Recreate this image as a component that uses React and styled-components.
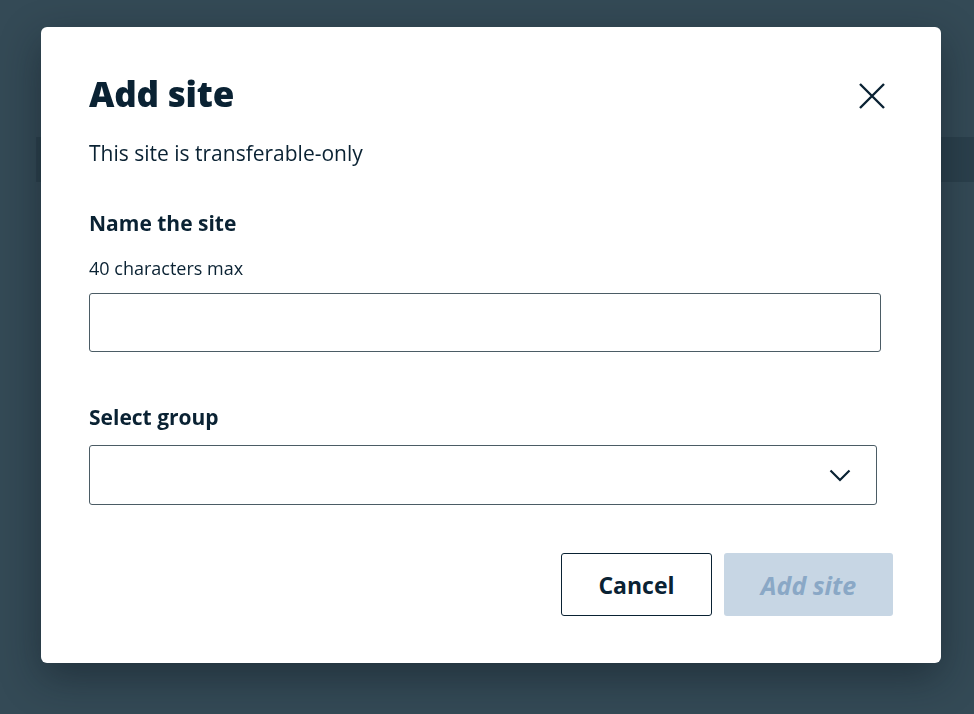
import React from 'react';
import styled, { createGlobalStyle } from 'styled-components';

const GlobalStyle = createGlobalStyle`
    html, body {
        margin: 0;
        padding: 0;
        background: #344a56;
        font-family: "Open Sans", "Noto Sans", sans-serif;
    }
    * {
        box-sizing: border-box;
    }
`;

const Page = styled.div`
    height: 714px;
    padding-top: 137px;
    padding-left: 36px;
`;

const PageBand = styled.div`
    height: 45px;
    background: #2b404c;
`;

const Overlay = styled.div`
    position: fixed;
    inset: 0;
    padding: 27px 0 0 41px;
`;

const Modal = styled.div`
    width: 900px;
    height: 636px;
    background: #ffffff;
    border-radius: 6px;
    padding: 41px 48px 47px 48px;
    color: #0a2233;
    box-shadow: 0 14px 40px rgba(10, 20, 28, 0.45);
    display: flex;
    flex-direction: column;
`;

const Header = styled.div`
    display: flex;
    justify-content: space-between;
    align-items: flex-start;
`;

const Title = styled.h1`
    margin: 3px 0 0;
    font-size: 35px;
    line-height: 46px;
    font-weight: 800;
    letter-spacing: -0.2px;
`;

const CloseButton = styled.button`
    width: 32px;
    height: 32px;
    margin: 12px 5px 0 0;
    padding: 0;
    border: none;
    background: none;
    display: flex;
    align-items: center;
    justify-content: center;
    color: #0a2233;
    cursor: pointer;
`;

const Subtitle = styled.p`
    margin: 23px 0 0;
    font-size: 21px;
    line-height: 26px;
`;

const Label = styled.label`
    display: block;
    margin-top: ${p => p.$top}px;
    font-size: 21px;
    line-height: 28px;
    font-weight: 700;
`;

const Hint = styled.div`
    margin-top: 19px;
    font-size: 18px;
    line-height: 24px;
`;

const TextInput = styled.input`
    display: block;
    width: 792px;
    height: 59px;
    margin-top: ${p => p.$top}px;
    border: 1px solid #4b5c65;
    border-radius: 3px;
    padding: 0 16px;
    font-family: inherit;
    font-size: 20px;
    outline: none;
`;

const SelectBox = styled.div`
    width: 788px;
    height: 60px;
    margin-top: 14px;
    border: 1px solid #4b5c65;
    border-radius: 3px;
    display: flex;
    align-items: center;
    justify-content: flex-end;
    padding-right: 25px;
`;

const Actions = styled.div`
    margin-top: 48px;
    display: flex;
    justify-content: flex-end;
    gap: 12px;
`;

const Button = styled.button`
    height: 63px;
    width: ${p => p.$width}px;
    border-radius: 3px;
    font-family: inherit;
    font-size: ${p => (p.$primary ? 25 : 23)}px;
    font-weight: 700;
    font-style: ${p => (p.$primary ? 'italic' : 'normal')};
    border: ${p => (p.$primary ? 'none' : '1px solid #0a2233')};
    background: ${p => (p.$primary ? '#c7d6e4' : '#ffffff')};
    color: ${p => (p.$primary ? '#8aa8c6' : '#0a2233')};
    cursor: ${p => (p.$primary ? 'default' : 'pointer')};
`;

function App() {
    return (
        <>
            <GlobalStyle />
            <Page>
                <PageBand />
            </Page>
            <Overlay>
                <Modal>
                    <Header>
                        <Title>Add site</Title>
                        <CloseButton aria-label="Close">
                            <svg width="26" height="26" viewBox="0 0 26 26" fill="none">
                                <path d="M1 1L25 25M25 1L1 25" stroke="currentColor" strokeWidth="2.4" />
                            </svg>
                        </CloseButton>
                    </Header>
                    <Subtitle>This site is transferable-only</Subtitle>

                    <Label $top={43} htmlFor="site-name">Name the site</Label>
                    <Hint>40 characters max</Hint>
                    <TextInput id="site-name" $top={13} />

                    <Label $top={51}>Select group</Label>
                    <SelectBox>
                        <svg width="22" height="13" viewBox="0 0 22 13" fill="none">
                            <path d="M1.5 1.5L11 11L20.5 1.5" stroke="#0a2233" strokeWidth="2.2" />
                        </svg>
                    </SelectBox>

                    <Actions>
                        <Button $width={151}>Cancel</Button>
                        <Button $width={169} $primary disabled>Add site</Button>
                    </Actions>
                </Modal>
            </Overlay>
        </>
    );
}

export default App;
